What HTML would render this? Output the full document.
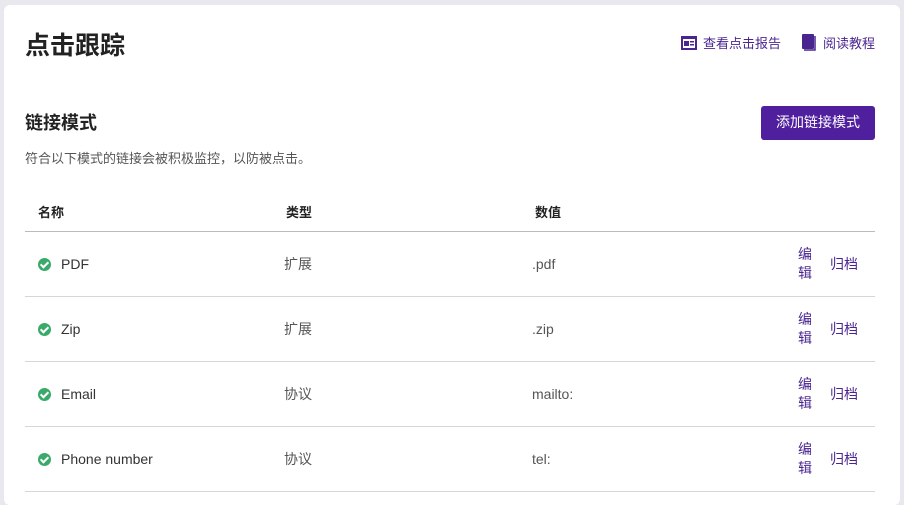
<!DOCTYPE html>
<html><head><meta charset="utf-8"><style>
*{margin:0;padding:0;box-sizing:border-box}
body{width:904px;height:495px;background:#e8e8ee;font-family:"Liberation Sans","Noto Sans CJK SC",sans-serif;overflow:hidden;position:relative}
.card{position:absolute;left:4px;top:5px;width:896px;height:500px;background:#fff;border-radius:6px}
.abs{position:absolute;white-space:nowrap}
h1{position:absolute;left:21px;top:21px;font-size:25px;font-weight:700;color:#222}
.link{color:#4a2590;font-size:13px}
.btn{position:absolute;left:757px;top:101px;width:114px;height:34px;background:#4f1f9e;color:#fff;border-radius:3px;font-size:14px;text-align:center;line-height:32px}
.hr{position:absolute;left:21px;width:850px;height:1px;background:#d6d6d6}
.th{font-size:13px;font-weight:700;color:#222;top:197px}
.td{font-size:14px;color:#333}
.ty{font-size:14px;color:#555}
.chk{position:absolute;left:34px;width:13px;height:13px;border-radius:50%;background:#3aaa6a}
.act{color:#4a2590;font-size:14px}
</style></head><body>
<div class="card">
<h1>点击跟踪</h1>
<div class="abs link" style="left:677px;top:28px"><svg width="16" height="14" style="vertical-align:-2px;margin-right:6px" viewBox="0 0 16 14"><rect x="0" y="0" width="16" height="14" fill="#4a2590"/><rect x="2" y="3" width="12" height="9" fill="#fff"/><rect x="3" y="5" width="5" height="5" fill="#4a2590"/><rect x="9" y="5" width="4" height="1.5" fill="#4a2590"/><rect x="9" y="8" width="4" height="1.5" fill="#4a2590"/></svg>查看点击报告</div>
<div class="abs link" style="left:798px;top:28px"><svg width="15" height="17" style="vertical-align:-3px;margin-right:6px" viewBox="0 0 15 17"><rect x="0" y="0" width="12" height="15" rx="1" fill="#4a2590"/><path d="M13 2 V16 H2" stroke="#4a2590" stroke-width="1.5" fill="none"/></svg>阅读教程</div>
<div class="abs" style="left:21px;top:104px;font-size:18px;font-weight:700;color:#222">链接模式</div>
<div class="btn">添加链接模式</div>
<div class="abs" style="left:21px;top:143px;font-size:13px;color:#555">符合以下模式的链接会被积极监控，以防被点击。</div>
<div class="abs th" style="left:34px">名称</div>
<div class="abs th" style="left:282px">类型</div>
<div class="abs th" style="left:531px">数值</div>
<div class="hr" style="top:226px;background:#bbb"></div>

<div class="chk" style="top:253px"></div><div class="abs td" style="left:57px;top:251px">PDF</div><div class="abs ty" style="left:280px;top:249px">扩展</div><div class="abs ty" style="left:528px;top:251px">.pdf</div>
<div class="abs act" style="left:794px;top:240px;line-height:19px">编<br>辑</div><div class="abs act" style="left:826px;top:249px">归档</div>
<div class="hr" style="top:291px"></div>

<div class="chk" style="top:318px"></div><div class="abs td" style="left:57px;top:316px">Zip</div><div class="abs ty" style="left:280px;top:314px">扩展</div><div class="abs ty" style="left:528px;top:316px">.zip</div>
<div class="abs act" style="left:794px;top:305px;line-height:19px">编<br>辑</div><div class="abs act" style="left:826px;top:314px">归档</div>
<div class="hr" style="top:356px"></div>

<div class="chk" style="top:383px"></div><div class="abs td" style="left:57px;top:381px">Email</div><div class="abs ty" style="left:280px;top:379px">协议</div><div class="abs ty" style="left:528px;top:381px">mailto:</div>
<div class="abs act" style="left:794px;top:370px;line-height:19px">编<br>辑</div><div class="abs act" style="left:826px;top:379px">归档</div>
<div class="hr" style="top:421px"></div>

<div class="chk" style="top:448px"></div><div class="abs td" style="left:57px;top:446px">Phone number</div><div class="abs ty" style="left:280px;top:444px">协议</div><div class="abs ty" style="left:528px;top:446px">tel:</div>
<div class="abs act" style="left:794px;top:435px;line-height:19px">编<br>辑</div><div class="abs act" style="left:826px;top:444px">归档</div>
<div class="hr" style="top:486px"></div>
</div>
<style>.chk::after{content:"";position:absolute;left:4px;top:2px;width:3px;height:6px;border:solid #fff;border-width:0 2px 2px 0;transform:rotate(45deg)}</style>
</body></html>
